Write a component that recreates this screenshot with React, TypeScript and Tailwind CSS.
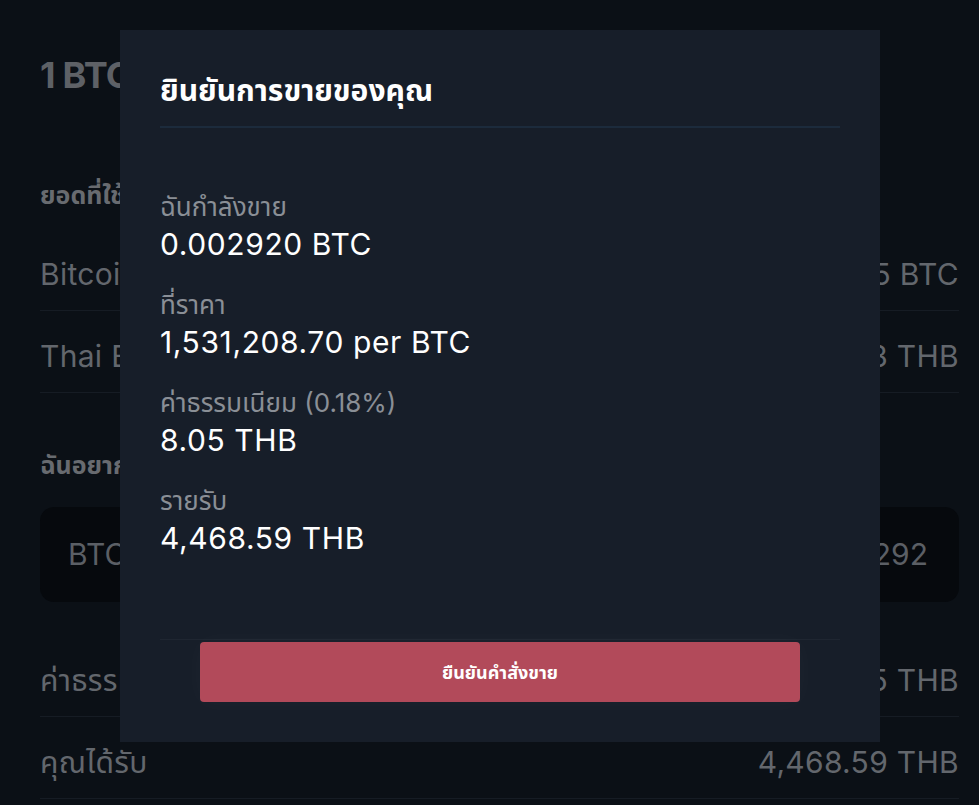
import React from "react";

const font = { fontFamily: '"Inter", "Noto Sans Thai", "Noto Sans", "DejaVu Sans", sans-serif' };

function BgRow({ left, right }: { left: string; right: string }) {
  return (
    <div className="flex h-[82px] items-center justify-between border-b border-[#161c24] pt-[8px] text-[30px] leading-[36px] tracking-[0.01em] text-[#63676d]">
      <span>{left}</span>
      <span>{right}</span>
    </div>
  );
}

function Item({ label, value }: { label: string; value: string }) {
  return (
    <div className="mb-[24px]">
      <div className="text-[26px] leading-[32px] text-[#8a8f96]">{label}</div>
      <div className="text-[30px] leading-[42px] tracking-[0.02em] text-white">{value}</div>
    </div>
  );
}

export default function App() {
  return (
    <div className="relative h-[805px] w-[979px] overflow-hidden bg-[#0b1016]" style={font}>
      {/* background page */}
      <div className="pl-[40px] pr-[20px] pt-[53px]">
        <div className="text-[36px] font-bold leading-[44px] tracking-[-0.02em] text-[#5e6166]">1 BTC = 1,531,208.70 THB</div>
        <div className="mt-[82px] text-[25px] font-bold leading-[32px] text-[#686b70]">ยอดที่ใช้ได้</div>
        <div className="mt-[18px]">
          <BgRow left="Bitcoin" right="0.00292025 BTC" />
          <BgRow left="Thai Baht" right="0.13 THB" />
        </div>
        <div className="mt-[56px] text-[25px] font-bold leading-[32px] text-[#686b70]">ฉันอยากขาย</div>
        <div className="mt-[26px] flex h-[95px] items-center justify-between rounded-[14px] bg-[#06090d] pl-[28px] pr-[31px] text-[30px] text-[#5b5f65]">
          <span>BTC</span>
          <span>0.00292</span>
        </div>
        <div className="mt-[33px]">
          <BgRow left="ค่าธรรมเนียม" right="8.05 THB" />
          <BgRow left="คุณได้รับ" right="4,468.59 THB" />
        </div>
      </div>

      {/* modal */}
      <div className="absolute left-[120px] top-[30px] flex h-[712px] w-[760px] flex-col bg-[#171e29] px-[40px] pt-[42px]">
        <div className="text-[30px] font-bold leading-[36px] text-white">ยินยันการขายของคุณ</div>
        <div className="mt-[18px] h-[2px] bg-[#1c2b3c]" />
        <div className="mt-[63px]">
          <Item label="ฉันกำลังขาย" value="0.002920 BTC" />
          <Item label="ที่ราคา" value="1,531,208.70 per BTC" />
          <Item label="ค่าธรรมเนียม (0.18%)" value="8.05 THB" />
          <Item label="รายรับ" value="4,468.59 THB" />
        </div>
        <div className="mt-auto border-t border-[#1f2631] pb-[40px] pt-[2px]">
          <div className="mx-[40px] flex h-[60px] items-center justify-center rounded-[4px] bg-[#b24a5a] text-[18px] font-bold text-white shadow-[0_0_24px_rgba(255,255,255,0.03)]">
            ยืนยันคำสั่งขาย
          </div>
        </div>
      </div>
    </div>
  );
}
